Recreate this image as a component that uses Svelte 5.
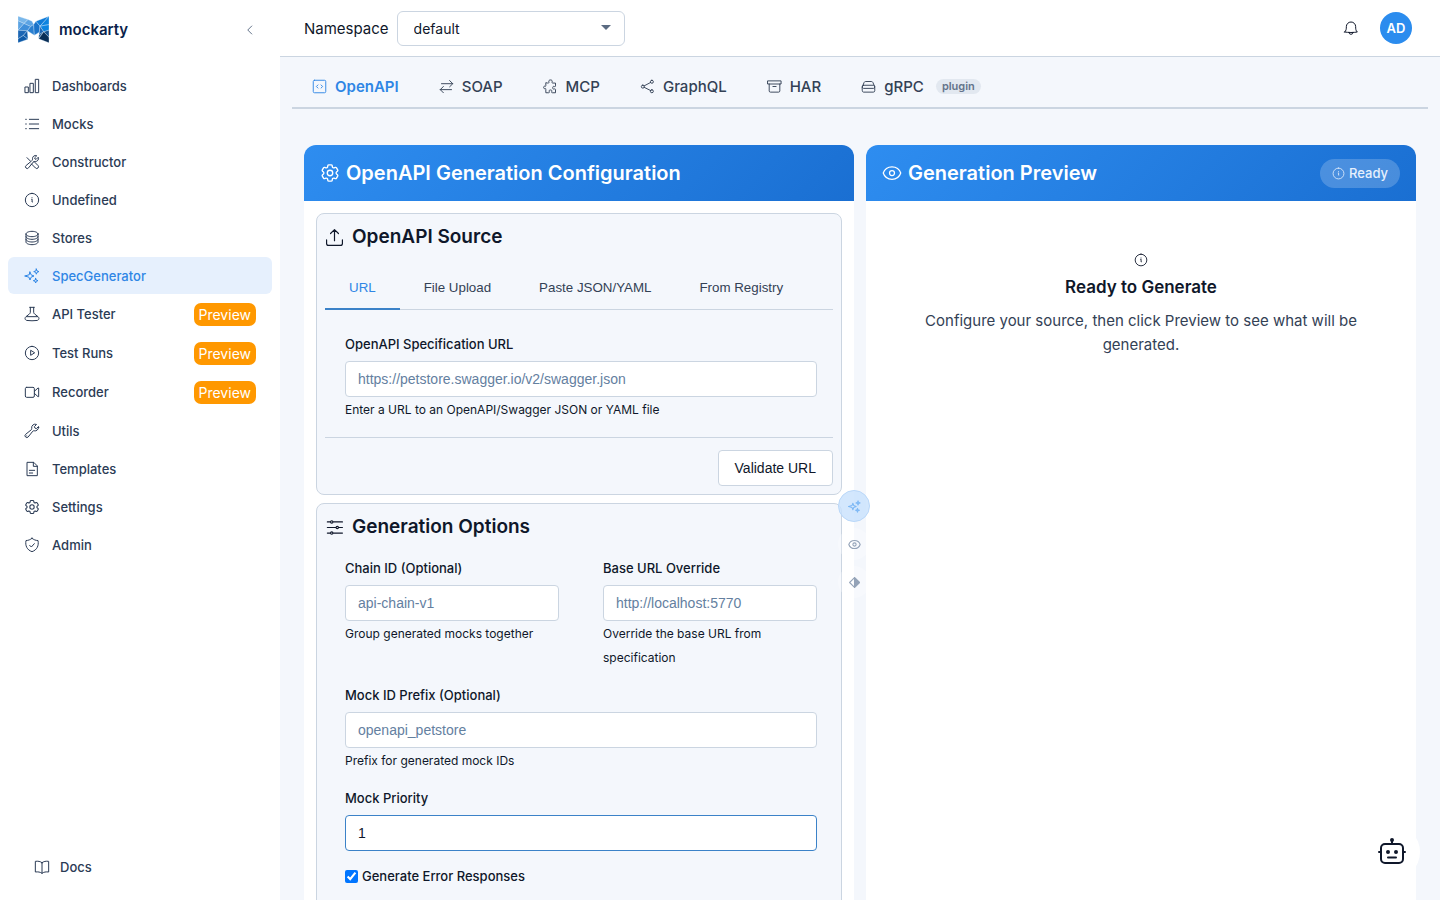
<script>
  const menu = [
    { name: 'Dashboards', icon: 'chart' },
    { name: 'Mocks', icon: 'list' },
    { name: 'Constructor', icon: 'tools' },
    { name: 'Undefined', icon: 'info' },
    { name: 'Stores', icon: 'db' },
    { name: 'SpecGenerator', icon: 'sparkles' },
    { name: 'API Tester', icon: 'flask', preview: true },
    { name: 'Test Runs', icon: 'play', preview: true },
    { name: 'Recorder', icon: 'video', preview: true },
    { name: 'Utils', icon: 'wrench' },
    { name: 'Templates', icon: 'file' },
    { name: 'Settings', icon: 'gear' },
    { name: 'Admin', icon: 'shield' }
  ];
  const specs = [
    { name: 'OpenAPI', icon: 'code' },
    { name: 'SOAP', icon: 'swap' },
    { name: 'MCP', icon: 'puzzle' },
    { name: 'GraphQL', icon: 'share' },
    { name: 'HAR', icon: 'archive' },
    { name: 'gRPC', icon: 'server', plugin: true }
  ];
  const sources = ['URL', 'File Upload', 'Paste JSON/YAML', 'From Registry'];

  // 24x24 outline icons
  const icons = {
    chart: 'M2 13.5h4.5V22H2zM9.5 8H14v14H9.5zM17.5 2H22v20h-4.5z',
    list: 'M8 5h14M8 12h14M8 19h14M2.500 5h1M2.500 12h1M2.500 19h1',
    tools: 'M11.420 15.170 17.250 21A2.652 2.652 0 0 0 21 17.250l-5.877-5.877M11.420 15.170l2.496-3.030c.317-.384.740-.626 1.208-.766M11.420 15.170l-4.655 5.653a2.548 2.548 0 1 1-3.586-3.586l6.837-5.630m5.108-.233c.550-.164 1.163-.188 1.743-.140a4.500 4.500 0 0 0 4.486-6.336l-3.276 3.277a3.004 3.004 0 0 1-2.250-2.250l3.276-3.276a4.500 4.500 0 0 0-6.336 4.486c.091 1.076-.071 2.264-.904 2.950l-.102.085M10 11 4.500 5.500',
    info: 'M12 2a10 10 0 1 0 0 20 10 10 0 0 0 0-20zM11.500 11h.8l-.3 4h.6M12 8.500v.2',
    db: 'M21 6c0 2.200-4 4-9 4S3 8.200 3 6s4-4 9-4 9 1.800 9 4zM21 6v12c0 2.200-4 4-9 4s-9-1.800-9-4V6M21 10c0 2.200-4 4-9 4s-9-1.800-9-4M21 14c0 2.200-4 4-9 4s-9-1.800-9-4',
    sparkles: 'M9 6l1.700 4.300L15 12l-4.300 1.700L9 18l-1.700-4.300L1 12l6.300-1.700zM18.500 1.500l1 2.900 2.900 1-2.900 1-1 2.900-1-2.900-2.900-1 2.900-1zM17.500 15.500l.9 2.600 2.600.9-2.600.9-.9 2.600-.9-2.600L14 19l2.600-.9z',
    flask: 'M8.500 2h7M9.500 2v7.500c0 1-.5 1.800-1.300 2.400L3 16c-2.500 2.200-1.500 5.200 1.500 5.700 5 .6 10 .6 15 0 3-.5 4-3.500 1.500-5.700l-5.200-4.100c-.8-.6-1.300-1.400-1.300-2.400V2M3.500 16h17',
    play: 'M12 2a10 10 0 1 0 0 20 10 10 0 0 0 0-20zM10 8.500v7l5.500-3.500z',
    video: 'M4 5h9.500a2 2 0 0 1 2 2v11a2 2 0 0 1-2 2H4a2 2 0 0 1-2-2V7a2 2 0 0 1 2-2zM15.500 11l5.500-5h1v13h-1l-5.500-5',
    wrench: 'M21.800 6.700a5.200 5.200 0 0 1-6.500 5c-.8-.2-1.600 0-2.100.6L6.200 21a2.700 2.700 0 1 1-3.900-3.900l8.700-7c.6-.5.8-1.300.6-2.100a5.200 5.200 0 0 1 7.200-5.800L15.500 5.500a3.500 3.500 0 0 0 3 3l3.300-3.300c.2.500.3 1 .3 1.500zM4 19.400h.1',
    file: 'M14 2H4.500v20h15.500V8zM14 2v6h6M8 14h8M8 18h5',
    gear: 'M9.594 3.940c.090-.542.560-.940 1.110-.940h2.593c.550 0 1.020.398 1.110.940l.213 1.281c.063.374.313.686.645.870.074.040.147.083.220.127.324.196.720.257 1.075.124l1.217-.456a1.125 1.125 0 0 1 1.370.490l1.296 2.247a1.125 1.125 0 0 1-.260 1.431l-1.003.827c-.293.240-.438.613-.431.992v.255c-.007.378.138.750.430.990l1.005.828c.424.350.534.954.260 1.430l-1.298 2.247a1.125 1.125 0 0 1-1.369.491l-1.217-.456c-.355-.133-.750-.072-1.076.124l-.220.128c-.331.183-.581.495-.644.869l-.213 1.280c-.090.543-.560.941-1.110.941h-2.594c-.550 0-1.020-.398-1.110-.940l-.213-1.281c-.062-.374-.312-.686-.644-.870l-.220-.127c-.325-.196-.720-.257-1.076-.124l-1.217.456a1.125 1.125 0 0 1-1.369-.490l-1.297-2.247a1.125 1.125 0 0 1 .260-1.431l1.004-.827c.292-.240.437-.613.430-.992v-.255c.007-.378-.138-.750-.430-.990l-1.004-.828a1.125 1.125 0 0 1-.260-1.430l1.297-2.247a1.125 1.125 0 0 1 1.370-.491l1.216.456c.356.133.751.072 1.076-.124l.220-.128c.332-.183.582-.495.644-.869zM15 12a3 3 0 1 1-6 0 3 3 0 0 1 6 0z',
    shield: 'M12 2c2.800 2.200 5.500 3.200 9 3.300C22.500 13 19.500 19.500 12 22 4.500 19.500 1.500 13 3 5.300c3.500-.1 6.200-1.100 9-3.300zM8.500 12.500l2.500 2.500 4.500-5',
    code: 'M4 2h16a2 2 0 0 1 2 2v16a2 2 0 0 1-2 2H4a2 2 0 0 1-2-2V4a2 2 0 0 1 2-2zM9.500 9.500 7 12l2.500 2.500M14.500 9.500 17 12l-2.500 2.500',
    swap: 'M4 7.500h18M17 2.500l5 5-5 5M20 17H2M7 12l-5 5 5 5',
    puzzle: 'M8 6.500c1.500 0 2-.7 1.500-1.800C8.500 2.800 10 1.500 12 1.500s3.500 1.300 2.500 3.200c-.5 1.100 0 1.800 1.500 1.800h4V11c0 1.300-.8 1.600-1.900 1-1.700-.8-2.600.4-2.600 2s1 2.800 2.600 2c1.100-.6 1.900-.2 1.900 1V22h-5c-1.300 0-1.600-.8-1-1.900.8-1.500-.4-2.600-2-2.600s-2.800 1.100-2 2.600c.6 1.100.2 1.900-1 1.900H4.500v-5.500c0-1.300-.5-1.700-1.500-1.200-1.300.5-2-.5-2-1.800s.8-2.500 2-1.900c1 .5 1.500 0 1.500-1V6.500z',
    share: 'M4.500 9.800a2.400 2.400 0 1 0 0 4.800 2.400 2.400 0 0 0 0-4.800zM19 2a2.400 2.400 0 1 0 0 4.800A2.400 2.400 0 0 0 19 2zM19 17.200a2.400 2.400 0 1 0 0 4.800 2.400 2.400 0 0 0 0-4.800zM6.700 11 17 5.500M6.700 13.300 17 18.500',
    archive: 'M1.500 3h21v5h-21zM3.500 8v11a2 2 0 0 0 2 2h13a2 2 0 0 0 2-2V8M9.500 12h5',
    server: 'M4 10h16a2.500 2.500 0 0 1 2 2.500A2.500 2.500 0 0 1 20 15H4a2.500 2.500 0 0 1-2-2.500A2.500 2.500 0 0 1 4 10zM2 12.500 5 5.500C5.500 4.400 6.300 4 7.500 4h9c1.200 0 2 .4 2.500 1.500l3 7v6.200c0 1.400-.8 2.300-2.300 2.300H4.300C2.800 21 2 20.100 2 18.700z',
    eye: 'M1.500 12C3 7.500 7 4.500 12 4.500S21 7.500 22.500 12C21 16.500 17 19.500 12 19.500S3 16.500 1.500 12zM12 9a3 3 0 1 0 0 6 3 3 0 0 0 0-6z',
    upload: 'M2 15v4.500A2.500 2.500 0 0 0 4.500 22h15a2.500 2.500 0 0 0 2.500-2.500V15M12 16V2M7 7l5-5 5 5',
    sliders: 'M3 5h4M10 5h12M3 12h11M17 12h5M3 19h4M10 19h12M8.500 3.500a1.500 1.500 0 1 0 0 3 1.500 1.500 0 0 0 0-3zM15.500 10.500a1.500 1.500 0 1 0 0 3 1.500 1.500 0 0 0 0-3zM8.500 17.500a1.500 1.500 0 1 0 0 3 1.500 1.500 0 0 0 0-3z',
    bell: 'M15 18.500a3 3 0 0 1-6 0M2.500 18c2.500-2 2.500-5 2.500-8a7 7 0 0 1 14 0c0 3 0 6 2.500 8-6 1-13 1-19 0z',
    book: 'M12 5.500C9.500 3.500 6 3 2 3.500v16c4-.5 7.500 0 10 2 2.500-2 6-2.500 10-2v-16c-4-.5-7.500 0-10 2zM12 5.500v16',
    chevron: 'M15.500 4l-8 8 8 8'
  };

  let source = $state('URL');
  let url = $state('');
  let chainId = $state('');
  let baseUrl = $state('');
  let prefix = $state('');
  let priority = $state('1');
  let errors = $state(true);
</script>

{#snippet icon(name)}
  <svg class="icon" viewBox={name === 'gear' ? '1 1 22 22' : '0 0 24 24'} aria-hidden="true"><path d={icons[name]} /></svg>
{/snippet}

<div class="shell">
  <aside>
    <div class="brand">
      <svg class="logo" viewBox="0 0 93 80" aria-hidden="true">
        <path fill="#79b7ea" d="M0 0 30 10 18 22 0 14z" />
        <path fill="#5ba3e3" d="M30 10 42 15 47 25 38 31 18 22zM0 14 18 22 0 42z" />
        <path fill="#3f8fda" d="M18 22 38 31 28 44 0 42z" />
        <path fill="#2a7fd0" d="M47 25 49 57 28 44 38 31z" />
        <path fill="#1b73c9" d="M47 25 54 15 66 30 64 48 49 57z" />
        <path fill="#0f7bd8" d="M54 15 93 0 66 30z" />
        <path fill="#0d84e0" d="M93 0 93 25 66 30zM66 30 93 25 93 42 77 47z" />
        <path fill="#1c66b4" d="M0 42 28 44 16 58 0 68zM66 30 77 47 63 56z" />
        <path fill="#0e5aa8" d="M28 44 30 69 16 58zM0 68 16 58 30 69 0 80z" />
        <path fill="#14508c" d="M63 56 77 47 62 66zM77 47 93 42 93 63z" />
        <path fill="#0a2f57" d="M77 47 93 63 93 80 62 68z" />
      </svg>
      <span class="wordmark">mockarty</span>
      <button class="collapse" aria-label="Collapse sidebar">{@render icon('chevron')}</button>
    </div>
    <nav class="menu">
      {#each menu as item}
        <a href="#top" class:active={item.name === 'SpecGenerator'} class:tall={item.preview}>
          {@render icon(item.icon)}
          <span>{item.name}</span>
          {#if item.preview}<span class="preview">Preview</span>{/if}
        </a>
      {/each}
    </nav>
    <a class="docs" href="#docs">{@render icon('book')}<span>Docs</span></a>
  </aside>

  <main>
    <header class="topbar">
      <label for="namespace">Namespace</label>
      <div class="select">
        <select id="namespace"><option>default</option></select>
        <svg viewBox="0 0 10 5" aria-hidden="true"><path d="M0 0h10L5 5z" /></svg>
      </div>
      <button class="bell" aria-label="Notifications">{@render icon('bell')}</button>
      <button class="avatar">AD</button>
    </header>

    <div class="content">
      <nav class="specs">
        {#each specs as spec}
          <a href="#spec" class:active={spec.name === 'OpenAPI'}>
            {@render icon(spec.icon)}
            <span>{spec.name}</span>
            {#if spec.plugin}<span class="plugin">plugin</span>{/if}
          </a>
        {/each}
      </nav>

      <div class="cards">
        <section class="card">
          <div class="card-head">
            {@render icon('gear')}
            <h2>OpenAPI Generation Configuration</h2>
          </div>
          <div class="card-body">
            <div class="box">
              <h3>{@render icon('upload')}OpenAPI Source</h3>
              <div class="sources">
                {#each sources as name}
                  <button class:active={source === name} onclick={() => (source = name)}>{name}</button>
                {/each}
              </div>
              <div class="fields">
                <div class="field">
                  <label for="url">OpenAPI Specification URL</label>
                  <input id="url" type="text" placeholder="https://petstore.swagger.io/v2/swagger.json" bind:value={url} />
                  <small>Enter a URL to an OpenAPI/Swagger JSON or YAML file</small>
                </div>
              </div>
              <div class="actions"><button>Validate URL</button></div>
            </div>

            <div class="box options">
              <h3>{@render icon('sliders')}Generation Options</h3>
              <div class="fields">
                <div class="row">
                  <div class="field">
                    <label for="chain">Chain ID (Optional)</label>
                    <input id="chain" type="text" placeholder="api-chain-v1" bind:value={chainId} />
                    <small>Group generated mocks together</small>
                  </div>
                  <div class="field">
                    <label for="base">Base URL Override</label>
                    <input id="base" type="text" placeholder="http://localhost:5770" bind:value={baseUrl} />
                    <small>Override the base URL from specification</small>
                  </div>
                </div>
                <div class="field">
                  <label for="prefix">Mock ID Prefix (Optional)</label>
                  <input id="prefix" type="text" placeholder="openapi_petstore" bind:value={prefix} />
                  <small>Prefix for generated mock IDs</small>
                </div>
                <div class="field">
                  <label for="priority">Mock Priority</label>
                  <input id="priority" class="changed" type="text" inputmode="numeric" bind:value={priority} />
                </div>
                <div class="check">
                  <input id="errors" type="checkbox" bind:checked={errors} />
                  <label for="errors">Generate Error Responses</label>
                </div>
              </div>
            </div>
          </div>
        </section>

        <section class="card">
          <div class="card-head">
            {@render icon('eye')}
            <h2>Generation Preview</h2>
            <span class="status">{@render icon('info')}Ready</span>
          </div>
          <div class="empty">
            {@render icon('info')}
            <h3>Ready to Generate</h3>
            <p>Configure your source, then click Preview to see what will be generated.</p>
          </div>
        </section>

        <div class="rail">
          <button class="active" aria-label="Generate">{@render icon('sparkles')}</button>
          <button aria-label="Preview">{@render icon('eye')}</button>
          <button aria-label="Compare">
            <svg class="icon" viewBox="0 0 24 24"><path d="M12 3 3 12l9 9 9-9z" /><path class="solid" d="M12 3v18l9-9z" /></svg>
          </button>
        </div>
      </div>
    </div>
  </main>

  <button class="bot" aria-label="Assistant">
    <svg viewBox="0 0 28 28" aria-hidden="true">
      <rect x="3" y="6" width="22" height="19" rx="4" />
      <path d="M14 2v4M1 14h2M25 14h2M10 19.500h8" />
      <circle cx="14" cy="2" r="1" />
      <circle cx="10" cy="14" r="1" />
      <circle cx="18" cy="14" r="1" />
    </svg>
  </button>
</div>

<style>
  :global(body) {
    margin: 0;
    background: #f4f7fc;
    color: #0f172a;
    font-family: Inter, 'Liberation Sans', sans-serif;
    font-size: 15px;
  }
  .shell, .shell * {
    box-sizing: border-box;
  }
  .shell {
    display: flex;
    height: 100vh;
  }
  a {
    color: inherit;
    text-decoration: none;
  }
  button {
    padding: 0;
    border: 0;
    background: none;
    color: inherit;
    font-family: inherit;
    cursor: pointer;
  }
  h2, h3, p {
    margin: 0;
  }
  .icon {
    flex: none;
    width: 16px;
    height: 16px;
    fill: none;
    stroke: currentColor;
    stroke-width: 1.5;
    stroke-linecap: round;
    stroke-linejoin: round;
  }

  /* sidebar */
  aside {
    display: flex;
    flex-direction: column;
    flex: none;
    width: 280px;
    padding: 0 8px 15px;
    background: #fff;
    color: #2b3b55;
    font-size: 13px;
    font-weight: 500;
  }
  .brand {
    display: flex;
    align-items: center;
    height: 59px;
    margin-bottom: 8px;
    padding: 0 16px 0 10px;
  }
  .logo {
    width: 31px;
    height: 27px;
    stroke: #dcecfb;
    stroke-width: 1;
  }
  .wordmark {
    flex: 1;
    margin-left: 10px;
    color: #0b1f4b;
    font-size: 15px;
    font-weight: 600;
  }
  .collapse {
    display: flex;
    color: #64748b;
  }
  .collapse .icon {
    width: 12px;
    height: 12px;
    stroke-width: 2;
  }
  .menu {
    display: flex;
    flex: 1;
    flex-direction: column;
    gap: 1px;
  }
  .menu a, .docs {
    display: flex;
    align-items: center;
    gap: 12px;
    height: 37px;
    padding: 0 16px;
    border-radius: 6px;
  }
  .menu a.tall {
    height: 38px;
  }
  .menu a.active {
    background: #e6f0fd;
    color: #2f86e5;
  }
  .preview {
    margin-left: auto;
    padding: 0 5px;
    border-radius: 7px;
    background: #ff9800;
    color: #fff;
    font-size: 14px;
    font-weight: 400;
    line-height: 23px;
  }
  .docs {
    gap: 10px;
    padding: 0 26px;
  }

  /* top bar */
  main {
    display: flex;
    flex: 1;
    flex-direction: column;
    min-width: 0;
  }
  .topbar {
    display: flex;
    align-items: center;
    flex: none;
    height: 57px;
    padding: 0 28px 0 24px;
    border-bottom: 1px solid #cbd5e1;
    background: #fff;
  }
  .select {
    position: relative;
    width: 228px;
    margin-left: 8px;
  }
  select {
    width: 100%;
    height: 35px;
    padding: 0 16px;
    border: 1px solid #cbd5e1;
    border-radius: 6px;
    appearance: none;
    background: #fff;
    color: #0f172a;
    font: 14px Inter, sans-serif;
  }
  .select svg {
    position: absolute;
    top: 14px;
    right: 14px;
    width: 10px;
    height: 5px;
    fill: #5b6b82;
    pointer-events: none;
  }
  .bell {
    display: flex;
    margin-left: auto;
  }
  .avatar {
    width: 32px;
    height: 32px;
    margin-left: 21px;
    border-radius: 50%;
    background: #2b8cee;
    color: #fff;
    font-size: 13px;
    font-weight: 600;
  }

  /* content */
  .content {
    flex: 1;
    min-height: 0;
    padding: 8px 12px 24px;
    overflow-y: auto;
    scrollbar-width: none;
  }
  .specs {
    display: flex;
    border-bottom: 2px solid #cbd5e1;
    color: #334155;
    font-size: 15px;
    font-weight: 500;
  }
  .specs a {
    display: flex;
    align-items: center;
    gap: 8px;
    height: 42px;
    padding: 0 20px;
  }
  .specs .icon {
    width: 15px;
    height: 15px;
  }
  .specs .active {
    color: #2f86e5;
    font-weight: 600;
  }
  .plugin {
    margin-left: 4px;
    padding: 0 6px;
    border-radius: 8px;
    background: #e2e8f0;
    color: #64748b;
    font-size: 11px;
    font-weight: 600;
    line-height: 15px;
  }
  .cards {
    position: relative;
    display: grid;
    grid-template-columns: 1fr 1fr;
    gap: 12px;
    padding: 36px 12px 0;
  }
  .card {
    min-width: 0;
    border-radius: 12px;
    background: #fff;
    overflow: hidden;
  }
  .card-head {
    display: flex;
    align-items: center;
    gap: 6px;
    height: 56px;
    padding: 0 16px;
    background: linear-gradient(135deg, #2e8df0, #1a6fd2);
    color: #fff;
  }
  .card-head .icon {
    width: 20px;
    height: 20px;
  }
  h2 {
    font-size: 20px;
    font-weight: 600;
  }
  .card-head .status {
    display: flex;
    align-items: center;
    gap: 4px;
    height: 29px;
    margin-left: auto;
    padding: 0 12px;
    border-radius: 15px;
    background: rgba(255, 255, 255, 0.2);
    color: #e6f0fd;
    font-size: 13px;
    font-weight: 500;
  }
  .card-head .status .icon {
    width: 13px;
    height: 13px;
  }
  .card-body {
    display: flex;
    flex-direction: column;
    gap: 8px;
    padding: 12px;
  }
  .box {
    padding: 8px;
    border: 1px solid #cbd5e1;
    border-radius: 8px;
    background: #f4f7fc;
  }
  h3 {
    display: flex;
    align-items: center;
    gap: 8px;
    font-size: 19px;
    font-weight: 600;
    line-height: 30px;
  }
  .box h3 .icon {
    width: 19px;
    height: 19px;
  }
  .sources {
    display: flex;
    margin-top: 14px;
    border-bottom: 1px solid #cbd5e1;
    color: #334155;
  }
  .sources button {
    height: 44px;
    margin-bottom: -1px;
    padding: 0 24px;
    border-bottom: 2px solid transparent;
    font-family: 'Liberation Sans', Arial, sans-serif;
  }
  .sources button.active {
    border-color: #3b82c8;
    color: #2f86e5;
  }
  .fields {
    display: flex;
    flex-direction: column;
    gap: 15px;
    padding: 24px 16px 15px 20px;
  }
  .options .fields {
    padding-top: 16px;
  }
  .row {
    display: grid;
    grid-template-columns: 1fr 1fr;
    gap: 44px;
  }
  .field {
    display: flex;
    flex-direction: column;
    min-width: 0;
  }
  .field label, .check label {
    font-size: 13px;
    font-weight: 500;
    line-height: 20px;
  }
  .field input {
    width: 100%;
    height: 36px;
    margin-top: 7px;
    padding: 0 12px;
    border: 1px solid #cbd5e1;
    border-radius: 4px;
    background: #fff;
    color: #0f172a;
    font: 14px 'Liberation Sans', Arial, sans-serif;
  }
  .field input::placeholder {
    color: #64809f;
  }
  .field input.changed {
    border-color: #3b82c8;
  }
  small {
    margin-top: 1px;
    font-size: 12px;
    line-height: 24px;
  }
  .actions {
    display: flex;
    justify-content: flex-end;
    padding-top: 12px;
    border-top: 1px solid #cbd5e1;
  }
  .actions button {
    height: 36px;
    padding: 0 16px;
    border: 1px solid #cbd5e1;
    border-radius: 4px;
    background: #fff;
    font-family: 'Liberation Sans', Arial, sans-serif;
    font-size: 14px;
  }
  .check {
    display: flex;
    align-items: center;
    gap: 4px;
  }
  .check input {
    width: 13px;
    height: 13px;
    margin: 0;
    accent-color: #0075ff;
  }
  .empty {
    display: flex;
    flex-direction: column;
    align-items: center;
    padding: 52px 48px;
    text-align: center;
  }
  .empty .icon {
    width: 14px;
    height: 14px;
  }
  .empty h3 {
    margin-top: 5px;
    font-size: 17px;
  }
  .empty p {
    margin-top: 7px;
    color: #334155;
    font-size: 15px;
    line-height: 24px;
  }

  /* floating controls between the two cards */
  .rail {
    position: fixed;
    top: 490px;
    left: calc(50% + 118px);
    display: grid;
    gap: 6px;
  }
  .rail button {
    display: grid;
    place-items: center;
    width: 32px;
    height: 32px;
    border-radius: 50%;
    background: rgba(255, 255, 255, 0.3);
    color: #94a3b8;
  }
  .rail .active {
    border: 1px solid #b9d7f8;
    background: rgba(200, 225, 252, 0.8);
    color: #7db8f5;
  }
  .rail .icon {
    width: 13px;
    height: 13px;
    stroke-width: 2;
  }
  .solid {
    fill: currentColor;
  }
  .bot {
    position: fixed;
    right: 20px;
    bottom: 20px;
    display: grid;
    place-items: center;
    width: 56px;
    height: 56px;
    border-radius: 50%;
    background: #fff;
    color: #0f172a;
  }
  .bot svg {
    width: 28px;
    height: 28px;
    fill: none;
    stroke: currentColor;
    stroke-width: 2;
    stroke-linecap: round;
  }
  .bot circle {
    fill: currentColor;
  }
</style>
